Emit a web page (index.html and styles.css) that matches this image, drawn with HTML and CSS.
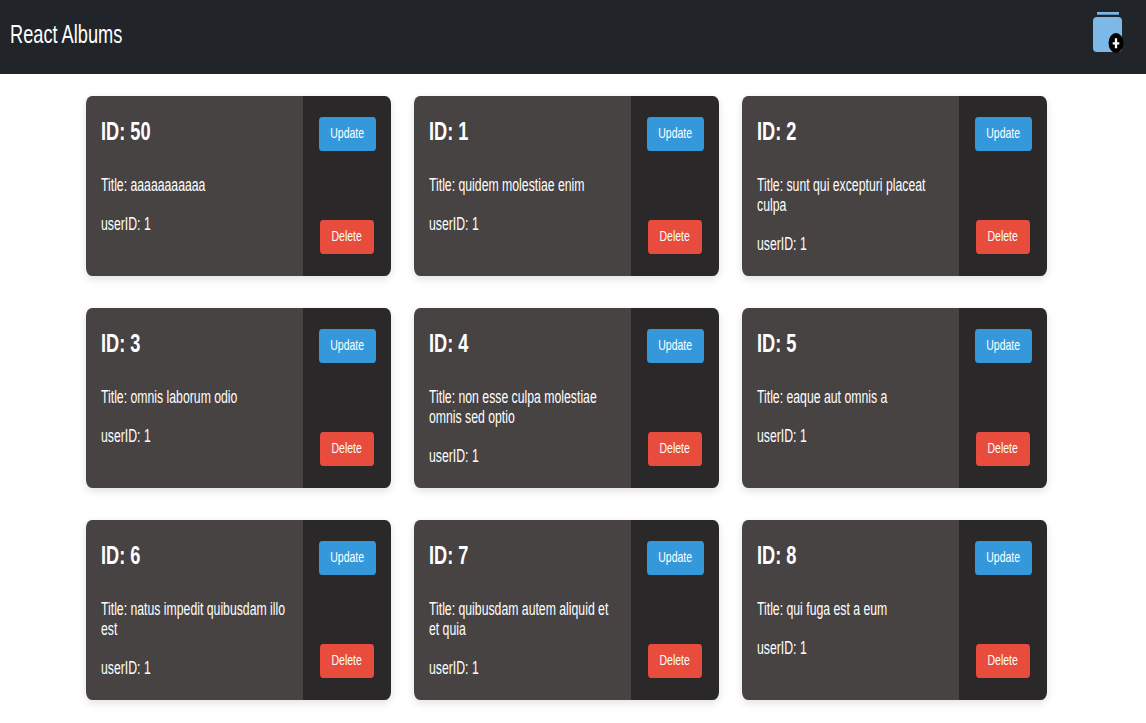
FILE: index.html
```html
<!DOCTYPE html>
<html lang="en">
<head>
<meta charset="utf-8">
<title>React Albums</title>
<link rel="stylesheet" href="styles.css">
</head>
<body>
  <header class="navbar">
    <span class="brand">React Albums</span>
    <svg class="add-icon" viewBox="0 0 31 41" aria-label="Add album">
      <rect x="4" y="0" width="22" height="2.7" fill="#7cb9e8"/>
      <rect x="0" y="5" width="29" height="35" rx="4" fill="#7cb9e8"/>
      <ellipse cx="23" cy="31" rx="7.5" ry="10" fill="#000"/>
      <path d="M19.7 31.3h6.6M23 26.3v10" stroke="#fff" stroke-width="2.3" fill="none"/>
    </svg>
  </header>
  <main class="grid">
    <article class="card"><div class="info"><div class="squeeze"><h2>ID: 50</h2><p class="title">Title: aaaaaaaaaaa</p><p>userID: 1</p></div></div><div class="actions"><button class="btn update"><span>Update</span></button><button class="btn delete"><span>Delete</span></button></div></article>
    <article class="card"><div class="info"><div class="squeeze"><h2>ID: 1</h2><p class="title">Title: quidem molestiae enim</p><p>userID: 1</p></div></div><div class="actions"><button class="btn update"><span>Update</span></button><button class="btn delete"><span>Delete</span></button></div></article>
    <article class="card"><div class="info"><div class="squeeze"><h2>ID: 2</h2><p class="title">Title: sunt qui excepturi placeat culpa</p><p>userID: 1</p></div></div><div class="actions"><button class="btn update"><span>Update</span></button><button class="btn delete"><span>Delete</span></button></div></article>
    <article class="card"><div class="info"><div class="squeeze"><h2>ID: 3</h2><p class="title">Title: omnis laborum odio</p><p>userID: 1</p></div></div><div class="actions"><button class="btn update"><span>Update</span></button><button class="btn delete"><span>Delete</span></button></div></article>
    <article class="card"><div class="info"><div class="squeeze"><h2>ID: 4</h2><p class="title">Title: non esse culpa molestiae omnis sed optio</p><p>userID: 1</p></div></div><div class="actions"><button class="btn update"><span>Update</span></button><button class="btn delete"><span>Delete</span></button></div></article>
    <article class="card"><div class="info"><div class="squeeze"><h2>ID: 5</h2><p class="title">Title: eaque aut omnis a</p><p>userID: 1</p></div></div><div class="actions"><button class="btn update"><span>Update</span></button><button class="btn delete"><span>Delete</span></button></div></article>
    <article class="card"><div class="info"><div class="squeeze"><h2>ID: 6</h2><p class="title">Title: natus impedit quibusdam illo est</p><p>userID: 1</p></div></div><div class="actions"><button class="btn update"><span>Update</span></button><button class="btn delete"><span>Delete</span></button></div></article>
    <article class="card"><div class="info"><div class="squeeze"><h2>ID: 7</h2><p class="title">Title: quibusdam autem aliquid et et quia</p><p>userID: 1</p></div></div><div class="actions"><button class="btn update"><span>Update</span></button><button class="btn delete"><span>Delete</span></button></div></article>
    <article class="card"><div class="info"><div class="squeeze"><h2>ID: 8</h2><p class="title">Title: qui fuga est a eum</p><p>userID: 1</p></div></div><div class="actions"><button class="btn update"><span>Update</span></button><button class="btn delete"><span>Delete</span></button></div></article>
  </main>
</body>
</html>
```

FILE: styles.css
```css
* { box-sizing: border-box; }
html, body { margin: 0; padding: 0; background: #fff; height: 723px; overflow: hidden; }
body { font-family: "Liberation Sans", Arial, sans-serif; }

.navbar {
  height: 74px;
  background: #212529;
  display: flex;
  justify-content: space-between;
  align-items: center;
  padding: 0 22px 0 10px;
}
.brand {
  display: inline-block;
  color: #fff;
  font-size: 26px;
  line-height: 30px;
  margin-top: -7px;
  width: 161px;
  white-space: nowrap;
  transform: scaleX(0.7);
  transform-origin: 0 0;
}
.add-icon { display: block; width: 31px; height: 41px; margin-top: -9px; }

.grid {
  display: grid;
  grid-template-columns: repeat(3, 305px);
  column-gap: 23px;
  row-gap: 32px;
  padding: 22px 0 0 86px;
}
.card {
  height: 180px;
  display: flex;
  border-radius: 6px / 8px;
  overflow: hidden;
  color: #fff;
  box-shadow: 0 3px 8px rgba(0, 0, 0, 0.12);
}
.info { flex: 1; background: #474343; padding: 20px 15px; min-width: 0; }
.squeeze { width: 267px; transform: scaleX(0.7); transform-origin: 0 0; }
.info h2 { margin: 0 0 29px; font-size: 26px; line-height: 30px; font-weight: 700; }
.info p { margin: 0; font-size: 17.5px; line-height: 20px; }
.info .title { margin-bottom: 19px; }
.actions {
  width: 88px;
  background: #2a2828;
  display: flex;
  flex-direction: column;
  justify-content: space-between;
  align-items: center;
  padding: 21px 0 22px;
}
.btn {
  height: 34px;
  border: 0;
  border-radius: 3px / 4px;
  color: #fff;
  font-family: inherit;
  font-size: 15px;
  padding: 0 0 3px;
}
.btn span { display: inline-block; transform: scaleX(0.7); }
.update { width: 57px; background: #3498db; }
.delete { width: 54px; background: #e74c3c; }
```
